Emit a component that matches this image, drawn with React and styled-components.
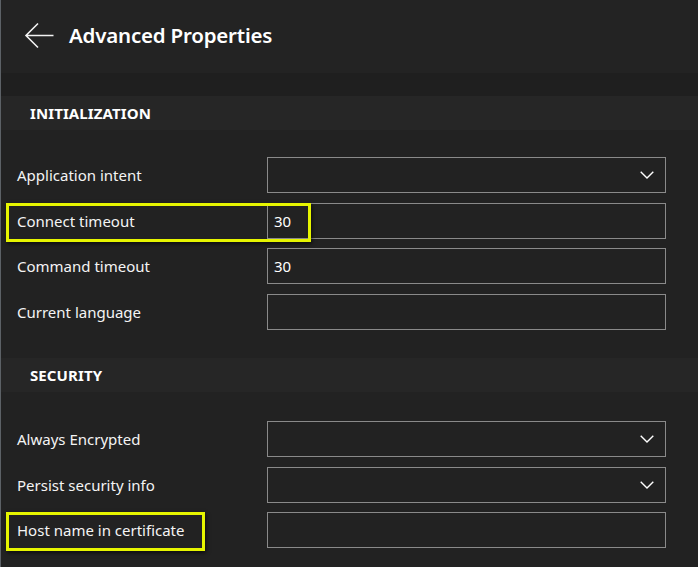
import React from 'react';
import styled, { createGlobalStyle } from 'styled-components';

const GlobalStyle = createGlobalStyle`
  html, body {
    margin: 0;
    padding: 0;
    background: #222222;
  }
  body {
    font-family: "Noto Sans", "Open Sans", sans-serif;
    color: #ffffff;
  }
`;

const Page = styled.div`
  width: 698px;
  height: 567px;
  box-sizing: border-box;
  border-left: 1px solid #5c6166;
  background: #222222;
  overflow: hidden;
`;

const Header = styled.div`
  height: 73px;
  box-sizing: border-box;
  display: flex;
  align-items: center;
  gap: 15px;
  padding: 0 0 3px 23px;
  background: #232323;
`;

const BackButton = styled.button`
  display: flex;
  align-items: center;
  padding: 0;
  margin-top: 2px;
  border: none;
  background: none;
  cursor: pointer;
`;

const Title = styled.h1`
  margin: 0;
  font-size: 20.5px;
  font-weight: 600;
  letter-spacing: -0.2px;
`;

const Strip = styled.div`
  height: 23px;
  background: #1f1f1f;
`;

const Section = styled.section`
  margin-top: ${p => p.$gap || 0}px;
`;

const SectionHeader = styled.div`
  height: 34px;
  display: flex;
  align-items: center;
  padding-left: 29px;
  background: #262626;
  font-size: 15px;
  font-weight: 700;
  letter-spacing: 0.1px;
`;

const Rows = styled.div`
  display: flex;
  flex-direction: column;
  gap: 9.67px;
  padding: ${p => p.$top}px 32px 0 16px;
`;

const Row = styled.div`
  position: relative;
  display: grid;
  grid-template-columns: 250px 1fr;
  align-items: center;
`;

const Label = styled.label`
  font-size: 15px;
  color: #f4f4f4;
`;

const Field = styled.div`
  height: 36px;
  box-sizing: border-box;
  display: flex;
  align-items: center;
  justify-content: space-between;
  padding: 0 11px 0 6px;
  border: 1px solid #8a8a8a;
  background: #222222;
  font-size: 15px;
  color: #ffffff;
`;

const Highlight = styled.div`
  position: absolute;
  left: -11px;
  top: 0;
  width: ${p => p.$width}px;
  height: 39px;
  box-sizing: border-box;
  border: 3px solid #e6f500;
  box-shadow: 1px 2px 4px rgba(0, 0, 0, 0.6);
  pointer-events: none;
`;

const Chevron = () => (
  <svg width="14" height="8" viewBox="0 0 14 8" fill="none">
    <path d="M0.7 0.7 L7 7 L13.3 0.7" stroke="#ffffff" strokeWidth="1.4" />
  </svg>
);

const BackArrow = () => (
  <svg width="30" height="28" viewBox="0 0 30 28" fill="none">
    <path d="M14 1.5 L2 13.5 L14 25.5 M2 13.5 H29.5" stroke="#f2f2f2" strokeWidth="1.6" />
  </svg>
);

const sections = [
  {
    title: 'INITIALIZATION',
    gap: 0,
    top: 27,
    rows: [
      { label: 'Application intent', select: true },
      { label: 'Connect timeout', value: '30', mark: 305 },
      { label: 'Command timeout', value: '30' },
      { label: 'Current language' },
    ],
  },
  {
    title: 'SECURITY',
    gap: 28,
    top: 29,
    rows: [
      { label: 'Always Encrypted', select: true },
      { label: 'Persist security info', select: true },
      { label: 'Host name in certificate', mark: 199 },
    ],
  },
];

const App = () => {
  return (
    <Page>
      <GlobalStyle />
      <Header>
        <BackButton aria-label="Back"><BackArrow /></BackButton>
        <Title>Advanced Properties</Title>
      </Header>
      <Strip />
      {sections.map(s => (
        <Section key={s.title} $gap={s.gap}>
          <SectionHeader>{s.title}</SectionHeader>
          <Rows $top={s.top}>
            {s.rows.map(r => (
              <Row key={r.label}>
                <Label>{r.label}</Label>
                <Field>
                  <span>{r.value}</span>
                  {r.select && <Chevron />}
                </Field>
                {r.mark && <Highlight $width={r.mark} />}
              </Row>
            ))}
          </Rows>
        </Section>
      ))}
    </Page>
  );
};

export default App;
